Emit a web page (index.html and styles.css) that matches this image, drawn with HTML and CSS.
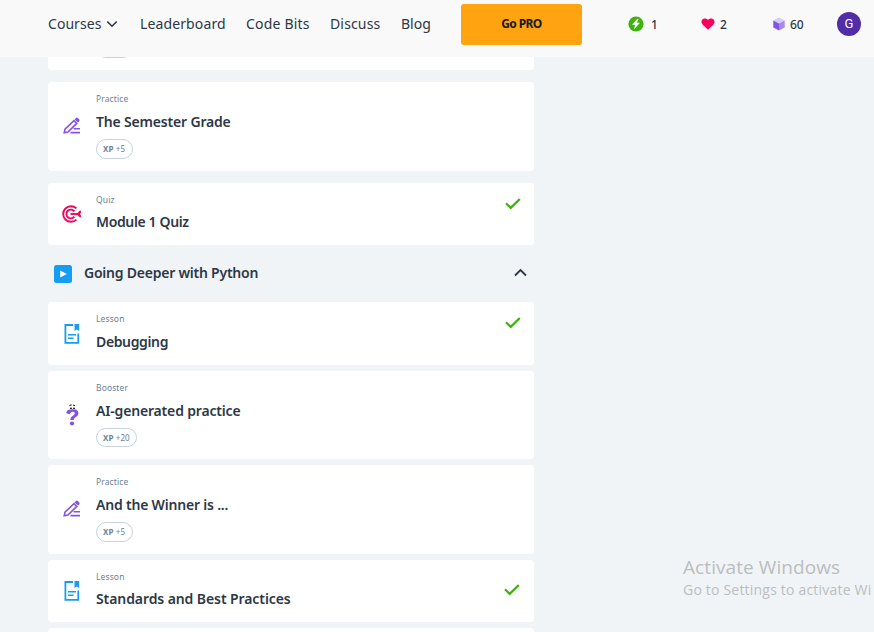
FILE: index.html
```html
<!DOCTYPE html>
<html lang="en">
<head>
<meta charset="utf-8">
<title>Going Deeper with Python</title>
<link rel="stylesheet" href="styles.css">
</head>
<body>
<svg class="sprite" aria-hidden="true">
  <symbol id="pencil" viewBox="0 0 18 18"><path d="M1.2 15.8 2 12.2 11 3.7 13.8 6.4 4.9 15Z" fill="none" stroke="currentColor" stroke-width="1.6"/><path d="M11.5 2.4 13.2.8Q14 .2 14.8 1L16.3 2.6Q17 3.4 16.3 4.2L15 5.6Z" fill="currentColor"/><path d="M10.5 11.8H17M7.5 15.6H17" stroke="currentColor" stroke-width="1.6"/></symbol>
  <symbol id="lesson" viewBox="0 0 16 20"><path d="M9 1H1.4V18.8H14.3V9.5" fill="none" stroke="currentColor" stroke-width="1.8"/><path d="M10.5 0H15.2V7L12.8 5.4 10.5 7Z" fill="currentColor"/><path d="M4 10.7H12M4 14.2H9.5" stroke="currentColor" stroke-width="1.6"/></symbol>
  <symbol id="check" viewBox="0 0 16 12"><path d="M1 5.3 5.7 9.9 14.8 1" fill="none" stroke="currentColor" stroke-width="2.2"/></symbol>
</svg>
<header class="topbar">
  <nav class="nav">
    <a class="courses">Courses <svg width="12" height="8" viewBox="0 0 12 8"><path d="M1.3 1.5 6 6.2 10.7 1.5" fill="none" stroke="currentColor" stroke-width="1.6"/></svg></a>
    <a class="leader">Leaderboard</a>
    <a class="bits">Code Bits</a>
    <a class="discuss">Discuss</a>
    <a class="blog">Blog</a>
  </nav>
  <button class="pro">Go PRO</button>
  <div class="stat streak"><svg width="16" height="16" viewBox="0 0 16 16"><circle cx="8" cy="8" r="7.6" fill="#3fb20b"/><path d="M9.3 2.8 4 8.8H7L6.1 13.2 12 6.8H8.8L10.6 3Z" fill="#fff"/></svg><span>1</span></div>
  <div class="stat hearts"><svg width="14" height="12" viewBox="0 0 14 12"><path d="M7 11.8 1.5 6.5C-1.6 3 2.6-2 7 1.8 11.4-2 15.6 3 12.5 6.5Z" fill="#fb005c"/></svg><span>2</span></div>
  <div class="stat bits-count"><svg width="12" height="14" viewBox="0 0 12 14"><path d="M6 .5 11.7 3.5 6 6.5.3 3.5Z" fill="#d6caf8"/><path d="M.3 3.5 6 6.5V13.5L.3 10.4Z" fill="#8453e5"/><path d="M11.7 3.5 6 6.5V13.5L11.7 10.4Z" fill="#aa86f0"/></svg><span>60</span></div>
  <div class="avatar">G</div>
</header>
<main class="course">
  <article class="card clipped"><span class="xp"></span></article>
  <article class="card tall practice">
    <svg class="icon violet" width="18" height="18"><use href="#pencil"/></svg>
    <div class="body"><p class="kind">Practice</p><h3 class="t-grade">The Semester Grade</h3><span class="xp"><b>XP</b> +5</span></div>
  </article>
  <article class="card quiz">
    <svg class="icon" width="20" height="18" viewBox="0 0 20 18"><g fill="none" stroke="#f5055d" stroke-width="1.9"><path d="M14.4 3.4A7.8 7.8 0 1 0 14.4 14.6"/><path d="M12.3 6.3A4.4 4.4 0 1 0 12.3 11.7"/><path d="M8.5 9H16"/></g><path d="M14.5 9 17.5 5.8H19V7.4L17.9 9 19 10.6V12.2H17.5Z" fill="#f5055d"/></svg>
    <div class="body"><p class="kind">Quiz</p><h3 class="t-quiz">Module 1 Quiz</h3></div>
    <svg class="check" width="16" height="12"><use href="#check"/></svg>
  </article>
  <div class="section">
    <svg width="18" height="18" viewBox="0 0 18 18"><rect width="18" height="18" rx="2.5" fill="#149df2"/><path d="M6.2 5.4 12.8 9 6.2 12.6Z" fill="#fff"/></svg>
    <h2>Going Deeper with Python</h2>
    <svg class="toggle" width="13" height="9" viewBox="0 0 13 9"><path d="M1 7.5 6.5 2 12 7.5" fill="none" stroke="#2d3846" stroke-width="1.9"/></svg>
  </div>
  <article class="card lesson-one">
    <svg class="icon blue" width="16" height="20"><use href="#lesson"/></svg>
    <div class="body"><p class="kind">Lesson</p><h3 class="t-debug">Debugging</h3></div>
    <svg class="check" width="16" height="12"><use href="#check"/></svg>
  </article>
  <article class="card booster">
    <svg class="icon" width="14" height="22" viewBox="0 0 14 22"><path d="M.3 9.3C.3 3.5 12.4 3 12.4 9.2 12.4 13.2 8 12.5 7.8 16H4.4C4.4 11.6 8.8 11.8 8.8 9.3 8.8 7 4.2 7 3.8 10.3Z" fill="#8553e0"/><circle cx="6" cy="19.5" r="2.1" fill="#8553e0"/><path d="M3.3 1.5 5.7 .8M7 1.1 9 1.8" stroke="#222b38" stroke-width="1.1"/><circle cx="4.8" cy="4.5" r="1.6" fill="#fff"/><circle cx="8.2" cy="4.5" r="1.6" fill="#fff"/><circle cx="5" cy="4.5" r="1" fill="#101828"/><circle cx="8" cy="4.5" r="1" fill="#101828"/></svg>
    <div class="body"><p class="kind">Booster</p><h3 class="t-ai">AI-generated practice</h3><span class="xp wide"><b>XP</b> +20</span></div>
  </article>
  <article class="card tall winner">
    <svg class="icon violet" width="18" height="18"><use href="#pencil"/></svg>
    <div class="body"><p class="kind">Practice</p><h3 class="t-winner">And the Winner is ...</h3><span class="xp"><b>XP</b> +5</span></div>
  </article>
  <article class="card standards">
    <svg class="icon blue" width="16" height="20"><use href="#lesson"/></svg>
    <div class="body"><p class="kind">Lesson</p><h3 class="t-std">Standards and Best Practices</h3></div>
    <svg class="check" width="16" height="12"><use href="#check"/></svg>
  </article>
  <article class="card next"></article>
</main>
<aside class="watermark"><p class="wm-title">Activate Windows</p><p class="wm-text">Go to Settings to activate Wi</p></aside>
</body>
</html>
```

FILE: styles.css
```css
* { box-sizing: border-box; }
body { margin: 0; width: 874px; height: 632px; overflow: hidden; background: #f0f4f7; color: #2d3846; font-family: "Noto Sans", "Open Sans", sans-serif; }
p, h2, h3 { margin: 0; }
svg { flex: none; display: block; }
.sprite { position: absolute; width: 0; height: 0; }
.topbar { display: flex; height: 57px; background: #f9f9f9; padding-left: 48px; }
.nav { display: flex; width: 413px; height: 48px; align-items: center; font-size: 14px; line-height: 20px; white-space: nowrap; }
.nav a { flex: none; }
.courses { display: flex; align-items: center; gap: 5px; width: 92px; letter-spacing: .05px; }
.leader { width: 106px; letter-spacing: .12px; }
.bits { width: 84px; letter-spacing: .2px; }
.discuss { width: 71px; letter-spacing: .15px; }
.pro { width: 121px; height: 41px; margin-top: 4px; padding: 0 0 1px; border: 0; border-radius: 3px; background: #ffa310; color: #17191d; font: 700 12px/20px "Noto Sans", sans-serif; letter-spacing: -.6px; }
.stat { display: flex; height: 48px; align-items: center; font-size: 12px; font-weight: 500; }
.streak { margin-left: 46px; width: 73px; gap: 7px; }
.hearts { width: 72px; gap: 5px; letter-spacing: -.2px; }
.bits-count { width: 64px; gap: 5px; letter-spacing: -.2px; }
.avatar { width: 24px; height: 24px; margin-top: 12px; border-radius: 50%; background: #512da8; color: #fff; text-align: center; font: 13px/24px Roboto, sans-serif; }
.course { width: 486px; margin-left: 48px; }
.card { display: flex; height: 62px; margin-bottom: 6px; padding: 11px 13px 0 16px; background: #fff; border-radius: 4px; }
.clipped { height: 13px; margin-bottom: 12px; padding: 0 0 0 48px; border-radius: 0 0 4px 4px; overflow: hidden; }
.clipped .xp { margin-top: -19px; }
.tall { height: 89px; }
.practice { margin-bottom: 12px; }
.quiz { margin-bottom: 0; }
.lesson-one { height: 63px; }
.booster { height: 88px; }
.icon { margin-right: 16px; }
.violet { color: #8553e0; margin: 24px 15px 0 -1px; }
.blue { color: #149df2; margin-top: 11px; }
.standards .blue { margin-top: 10px; }
.quiz .icon { margin: 11px 14px 0 -2px; }
.booster .icon { margin: 22px 16px 0 2px; }
.body { flex: 1; white-space: nowrap; }
.kind { font-size: 8.5px; line-height: 12px; color: #6c7f96; letter-spacing: .12px; }
h2, h3 { font-size: 14px; font-weight: 600; line-height: 20px; }
h3 { margin-top: 7px; }
.quiz h3, .standards h3 { margin-top: 6px; }
.t-grade { letter-spacing: -.18px; }
.t-quiz { letter-spacing: -.36px; }
.t-debug { letter-spacing: -.36px; }
.t-ai { letter-spacing: -.17px; }
.t-winner { letter-spacing: -.2px; }
.t-std { letter-spacing: -.09px; }
.xp { display: block; width: 37px; height: 20px; margin-top: 7px; padding-left: 6px; border: 1px solid #c8d2db; border-radius: 10px; color: #6c7f96; font-size: 8px; line-height: 17px; letter-spacing: .1px; }
.wide { width: 41px; height: 19px; }
.xp b { font-weight: 700; }
.check { color: #3fb20b; margin-top: 4px; }
.standards .check { margin: 13px 1px 0 -1px; }
.section { display: flex; align-items: center; height: 57px; padding: 0 7px 0 6px; }
.section h2 { flex: 1; margin: -2px 0 0 12px; letter-spacing: -.23px; }
.section .toggle { margin-top: -2px; }
.next { height: 4px; margin-bottom: 0; border-radius: 4px 4px 0 0; }
.watermark { position: absolute; left: 683px; top: 555px; width: 191px; white-space: nowrap; color: #bbbec0; font-family: "Open Sans", sans-serif; }
.wm-title { font-size: 19px; line-height: 25px; letter-spacing: .08px; }
.wm-text { font-size: 14px; line-height: 20px; letter-spacing: .2px; }
```
